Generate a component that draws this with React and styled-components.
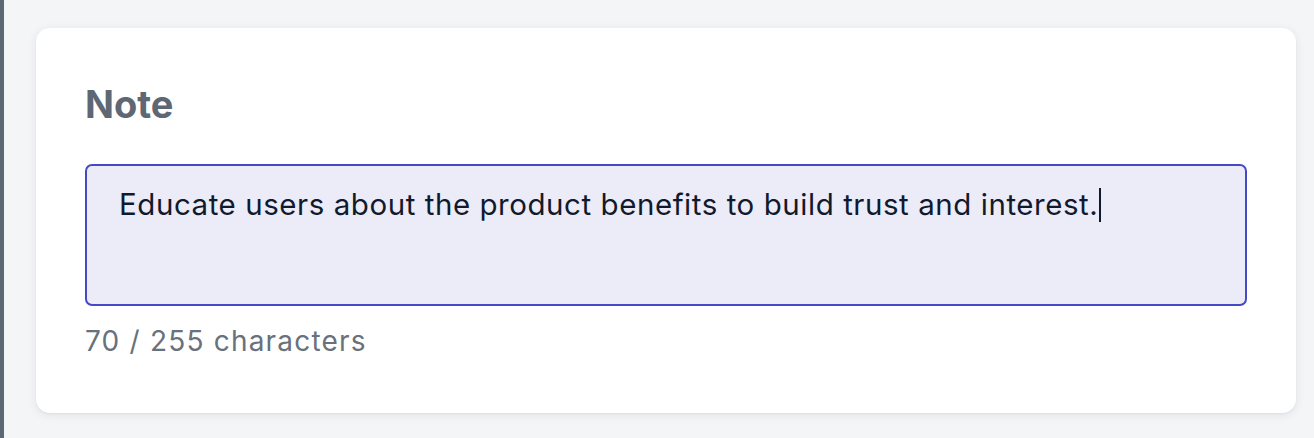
import React from 'react'
import styled, { createGlobalStyle } from 'styled-components'

const GlobalStyle = createGlobalStyle`
  html, body {
    margin: 0;
    padding: 0;
    background: #f4f5f7;
    font-family: Inter, "Noto Sans", "Liberation Sans", sans-serif;
  }
`

const Page = styled.div`
  display: flex;
  min-height: 438px;
  background: #f4f5f7;`

const SideRule = styled.div`
  width: 4px;
  flex-shrink: 0;
  background: #5d6875;`

const Main = styled.main`
  flex: 1;
  padding: 28px 18px 27px 32px;`

const Card = styled.section`
  background: #ffffff;
  border-radius: 14px;
  box-shadow: 0 2px 10px rgba(30, 40, 60, 0.09), 0 1px 2px rgba(30, 40, 60, 0.05);
  padding: 52px 49px 52px 49px;`

const Title = styled.h2`
  margin: 0;
  font-size: 38px;
  line-height: 48px;
  font-weight: 700;
  color: #5e6874;`

const Box = styled.div`
  margin-top: 36px;
  height: 142px;
  box-sizing: border-box;
  border: 2px solid #4649c6;
  border-radius: 7px;
  background: #ecebf8;
  padding: 17px 32px 15px;
  font-size: 29.5px;
  letter-spacing: 0.55px;
  line-height: 42px;
  color: #111a2c;`

const Caret = styled.span`
  display: inline-block;
  width: 2px;
  height: 34px;
  margin-left: 1px;
  vertical-align: -7px;
  background: #111a2c;`

const Counter = styled.p`
  margin: 16px 0 0;
  font-size: 28px;
  letter-spacing: 1.2px;
  line-height: 39px;
  color: #68717c;`

export default function App() {
  const note = 'Educate users about the product benefits to build trust and interest.'
  return (
    <Page>
      <GlobalStyle />
      <SideRule />
      <Main>
        <Card>
          <Title>Note</Title>
          <Box role="textbox" aria-multiline="true">
            {note}<Caret />
          </Box>
          <Counter>70 / 255 characters</Counter>
        </Card>
      </Main>
    </Page>
  )
}
